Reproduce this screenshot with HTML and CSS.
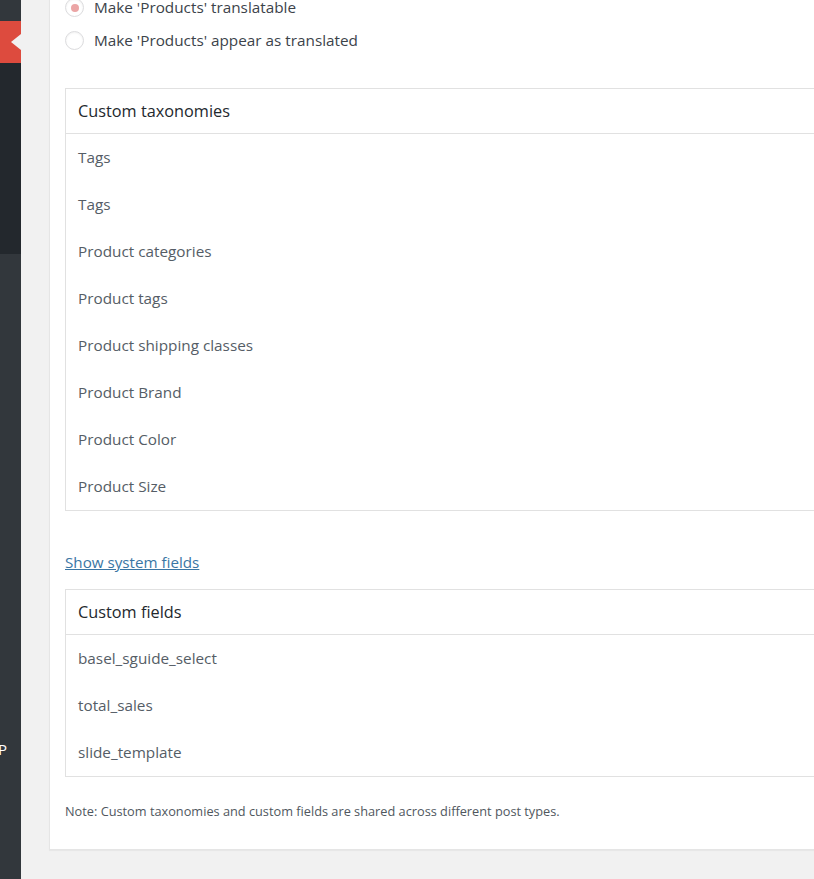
FILE: index.html
```html
<!DOCTYPE html>
<html>
<head>
<meta charset="utf-8">
<link rel="stylesheet" href="styles.css">
</head>
<body>
<div class="layout">
  <aside class="sidebar">
    <div class="sb-top"></div>
    <div class="sb-current"><span class="notch"></span></div>
    <div class="sb-sub"></div>
    <div class="sb-rest"><span class="sb-letter">P</span></div>
  </aside>
  <main class="content">
    <div class="card">
      <div class="radio-row">
        <span class="radio checked"></span>
        <span class="radio-label">Make 'Products' translatable</span>
      </div>
      <div class="radio-row">
        <span class="radio"></span>
        <span class="radio-label">Make 'Products' appear as translated</span>
      </div>

      <div class="box box-tax">
        <div class="box-head">Custom taxonomies</div>
        <div class="box-row">Tags</div>
        <div class="box-row">Tags</div>
        <div class="box-row">Product categories</div>
        <div class="box-row">Product tags</div>
        <div class="box-row">Product shipping classes</div>
        <div class="box-row">Product Brand</div>
        <div class="box-row">Product Color</div>
        <div class="box-row">Product Size</div>
      </div>

      <div class="link-row"><a class="sys-link" href="#">Show system fields</a></div>

      <div class="box">
        <div class="box-head">Custom fields</div>
        <div class="box-row">basel_sguide_select</div>
        <div class="box-row">total_sales</div>
        <div class="box-row">slide_template</div>
      </div>

      <p class="note">Note: Custom taxonomies and custom fields are shared across different post types.</p>
    </div>
  </main>
</div>
</body>
</html>
```

FILE: styles.css
```css
html, body {
  margin: 0;
  padding: 0;
  height: 100%;
  background: #f1f1f1;
  overflow: hidden;
}
body {
  font-family: "Open Sans", "Noto Sans", sans-serif;
  color: #50575e;
}
.layout {
  display: flex;
  height: 879px;
}
.sidebar {
  width: 21px;
  flex: 0 0 21px;
  display: flex;
  flex-direction: column;
}
.sb-top { height: 21px; background: #32373c; }
.sb-current {
  height: 42px;
  background: #dd4b3e;
  position: relative;
}
.notch {
  position: absolute;
  right: 0;
  top: 13px;
  width: 0;
  height: 0;
  border-top: 8px solid transparent;
  border-bottom: 8px solid transparent;
  border-right: 10px solid #f1f1f1;
}
.sb-sub { height: 191px; background: #23282d; }
.sb-rest {
  flex: 1;
  background: #32373c;
  position: relative;
  overflow: hidden;
}
.sb-letter {
  position: absolute;
  left: -2px;
  top: 485px;
  color: #fff;
  font-size: 15px;
  line-height: 20px;
}
.content {
  flex: 1;
  padding-left: 28px;
  min-width: 0;
}
.card {
  margin-top: -10px;
  background: #fff;
  border: 1px solid #e5e5e5;
  border-right: none;
  box-shadow: 0 1px 1px rgba(0,0,0,.04);
  padding: 0 0 29px 15px;
}
.radio-row {
  display: flex;
  align-items: center;
  height: 33px;
  gap: 10px;
}
.radio {
  width: 17px;
  height: 17px;
  border: 1px solid #dcdcde;
  border-radius: 50%;
  box-shadow: inset 0 1px 2px rgba(0,0,0,.06);
  display: flex;
  align-items: center;
  justify-content: center;
  flex: 0 0 auto;
}
.radio.checked::before {
  content: "";
  width: 8px;
  height: 8px;
  border-radius: 50%;
  background: #eba5a5;
}
.radio-label {
  font-size: 15.3px;
  color: #3c434a;
  white-space: nowrap;
  margin-top: -2px;
}
.box {
  border: 1px solid #e1e1e1;
  border-right: none;
}
.box-tax { margin-top: 31px; }
.box-head {
  height: 44px;
  display: flex;
  align-items: center;
  padding-left: 12px;
  font-size: 16.3px;
  color: #23282d;
  border-bottom: 1px solid #e1e1e1;
}
.box-row {
  height: 47px;
  box-sizing: border-box;
  padding-bottom: 2px;
  display: flex;
  align-items: center;
  padding-left: 12px;
  font-size: 15.3px;
  color: #555d66;
}
.link-row {
  height: 78px;
  display: flex;
  align-items: flex-end;
  box-sizing: border-box;
  padding-bottom: 17px;
}
.sys-link {
  color: #3a76a4;
  font-size: 15.2px;
  text-decoration: underline;
}
.note {
  margin: 25px 0 0 0;
  font-size: 12.75px;
  color: #50575e;
}
```
